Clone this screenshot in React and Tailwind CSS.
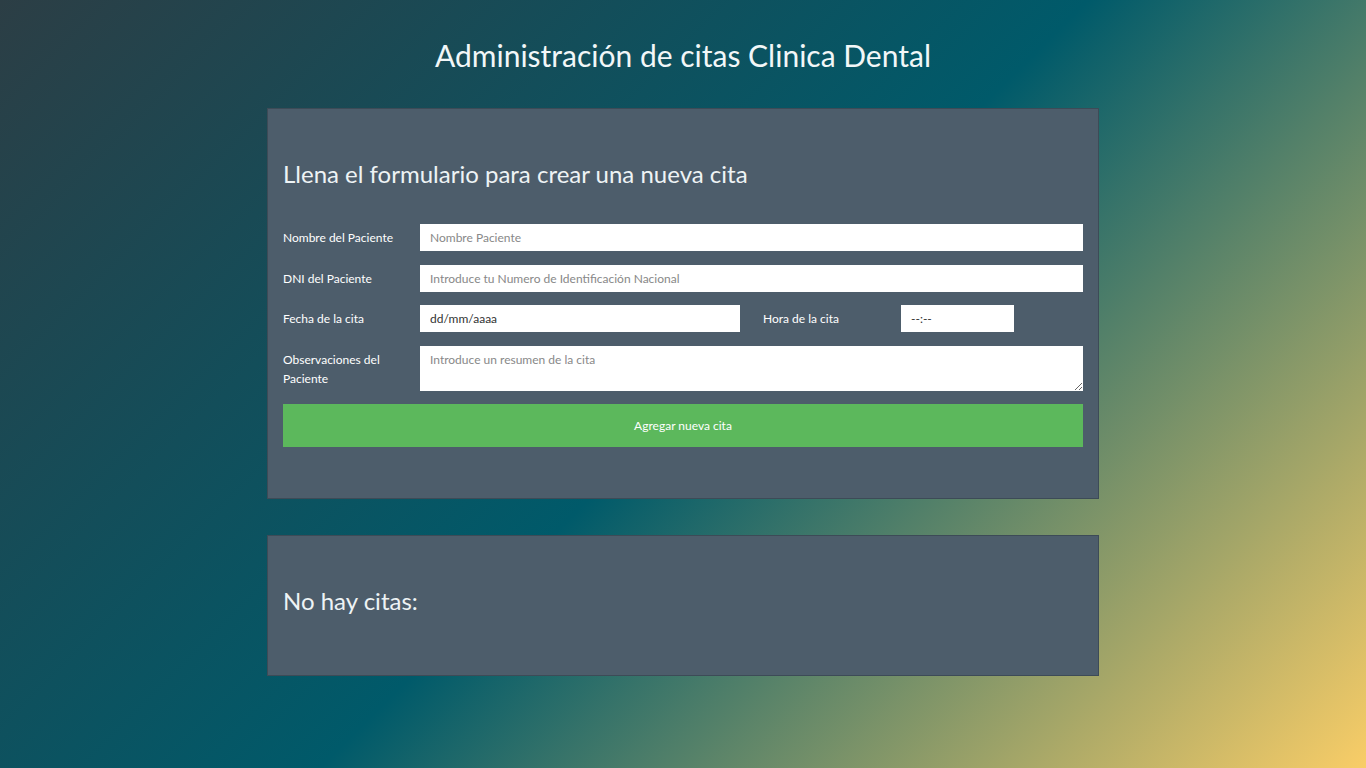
import { useState } from 'react'

const Row = ({ label, children, tall, className = '' }) => (
  <div className={`flex ${tall ? 'items-start' : 'items-center'} ${className}`}>
    <label className={`w-[137px] shrink-0 pr-3 text-[12px] text-white ${tall ? 'leading-[19px] pt-[4px]' : ''}`}>{label}</label>
    {children}
  </div>
)

const App = () => {
  const [nombre, setNombre] = useState('')
  const [dni, setDni] = useState('')
  const [obs, setObs] = useState('')

  return (
    <div
      className="min-h-screen w-full font-['Lato','Open_Sans',sans-serif] bg-[linear-gradient(135deg,#2c3e45_0%,#005a6a_51%,#f9cd67_100%)]"
    >
      <div className="pt-[35px] pb-[92px]">
        <h1 className="text-center text-[30px] leading-[40px] text-[#f2f7f8]">
          Administración de citas Clinica Dental
        </h1>

        <div className="mx-auto mt-[33px] w-[832px] border border-[#3d4b57] bg-[#4d5d6b] px-[15px] pt-[48px] pb-[51px]">
          <h2 className="text-[24px] leading-[34px] text-[#eef3f5]">Llena el formulario para crear una nueva cita</h2>

          <div className="mt-[33px] flex flex-col">
            <Row label="Nombre del Paciente">
              <input
                value={nombre}
                onChange={(e) => setNombre(e.target.value)}
                placeholder="Nombre Paciente"
                className="h-[27px] flex-1 bg-white px-[10px] text-[12px] text-[#333] outline-none placeholder:text-[#888]"
              />
            </Row>
            <Row label="DNI del Paciente" className="mt-[14px]">
              <input
                value={dni}
                onChange={(e) => setDni(e.target.value)}
                placeholder="Introduce tu Numero de Identificación Nacional"
                className="h-[27px] flex-1 bg-white px-[10px] text-[12px] text-[#333] outline-none placeholder:text-[#888]"
              />
            </Row>
            <Row label="Fecha de la cita" className="mt-[13px]">
              <input
                readOnly
                value="dd/mm/aaaa"
                className="h-[27px] w-[320px] bg-white px-[10px] text-[12px] text-[#333] outline-none"
              />
              <label className="ml-[23px] w-[138px] text-[12px] text-white">Hora de la cita</label>
              <input
                readOnly
                value="--:--"
                className="h-[27px] w-[113px] bg-white px-[10px] text-[12px] text-[#333] outline-none"
              />
            </Row>
            <Row label="Observaciones del Paciente" tall className="mt-[14px]">
              <textarea
                value={obs}
                onChange={(e) => setObs(e.target.value)}
                placeholder="Introduce un resumen de la cita"
                className="h-[45px] flex-1 bg-white px-[10px] py-[5px] text-[12px] text-[#333] outline-none placeholder:text-[#888]"
              />
            </Row>
          </div>

          <button className="mt-[13px] h-[43px] w-full bg-[#5cb85c] text-[12px] text-white">
            Agregar nueva cita
          </button>
        </div>

        <div className="mx-auto mt-[36px] w-[832px] border border-[#3d4b57] bg-[#4d5d6b] px-[15px] pt-[46px] pb-[55px]">
          <h2 className="text-[24px] leading-[38px] text-[#eef3f5]">No hay citas:</h2>
        </div>
      </div>
    </div>
  )
}

export default App
